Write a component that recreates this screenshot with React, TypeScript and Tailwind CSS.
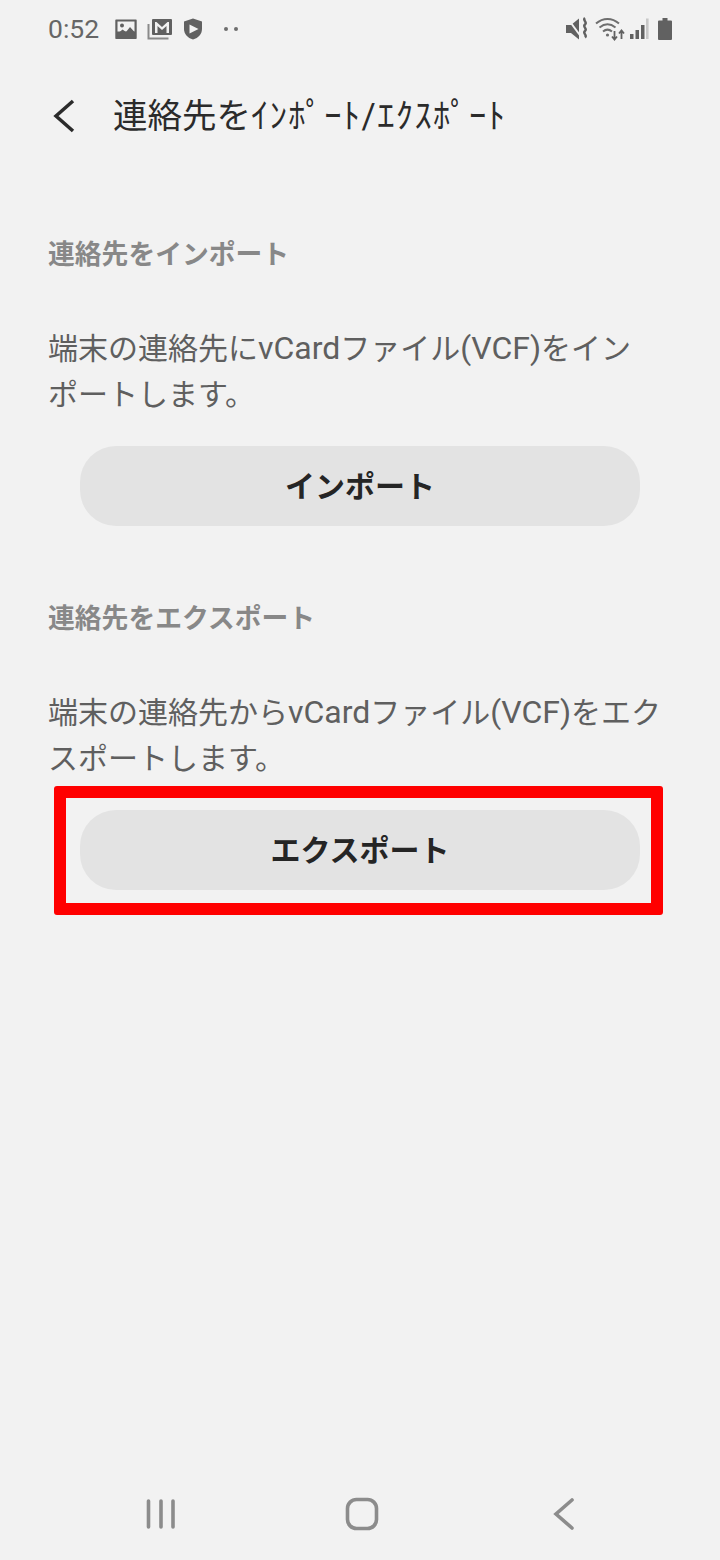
const font = "font-['Roboto','Noto_Sans_CJK_JP',sans-serif]";

const StatusLeft = () => (
  <div className="flex items-center">
    <span className="text-[26.500px] leading-none text-[#666666] w-[66px]">0:52</span>
    <svg width="24" height="24" viewBox="0 0 24 24" fill="#616161" className="mr-[9px]">
      <path d="M2 2.500h20a.7.7 0 0 1 .7.7v18a.7.7 0 0 1-.7.7H2a.7.7 0 0 1-.7-.7v-18a.7.7 0 0 1 .7-.7z" />
      <rect x="3.500" y="4.500" width="17" height="10" fill="#f2f2f2" />
      <path d="M3.500 17l5-4.500 3.500 2.500 4-5 4.500 5v5h-17z" />
      <circle cx="8" cy="8.500" r="2" />
    </svg>
    <svg width="26" height="24" viewBox="0 0 26 24" className="mr-[10px]">
      <path d="M1.500 7v14.500h20" fill="none" stroke="#8a8a8a" strokeWidth="2" />
      <rect x="5" y="2" width="20" height="16" rx="1" fill="#616161" />
      <path d="M8 16V5h1.500l5.500 5 5.500-5H22v11h-2.500V9l-4.500 4-4.500-4v7z" fill="#f2f2f2" />
    </svg>
    <svg width="20" height="24" viewBox="0 0 20 24" className="mr-[21px]">
      <path d="M10 1.500l9 3v7.500c0 5-3.500 9-9 10.500C4.500 21 1 17 1 12V4.500z" fill="#616161" />
      <path d="M6.500 7.500l9 4.500-9 4.500z" fill="#f2f2f2" />
    </svg>
    <span className="w-[4px] h-[4px] rounded-full bg-[#6e6e6e] mr-[6px]" />
    <span className="w-[4px] h-[4px] rounded-full bg-[#6e6e6e]" />
  </div>
);

const StatusRight = () => (
  <div className="flex items-center">
    <svg width="24" height="24" viewBox="0 0 24 24" className="mr-[6px]">
      <path d="M1 8h5l8-6.500v21L6 16H1z" fill="#616161" />
      <path d="M3 2l14 19" stroke="#f2f2f2" strokeWidth="2" />
      <path d="M20 1c-3 2.500 3 4 0 6.500s3 4 0 6.500 3 4 0 6.500" fill="none" stroke="#616161" strokeWidth="2.400" />
    </svg>
    <svg width="30" height="24" viewBox="0 0 30 24" fill="none" className="mr-[4px]">
      <path d="M1 6.500c7-6 16-6 23 0" stroke="#6e6e6e" strokeWidth="2" />
      <path d="M4.500 10.500c5-4 11-4 16 0" stroke="#6e6e6e" strokeWidth="2" />
      <path d="M8 14.500c3-2.500 6-2.500 9 0" stroke="#6e6e6e" strokeWidth="2" />
      <circle cx="12.500" cy="18" r="1.600" fill="#6e6e6e" />
      <path d="M19.500 14v8M17 19.500l2.500 3 2.500-3M26.500 22v-8M24 16.500l2.500-3 2.500 3" stroke="#616161" strokeWidth="1.800" />
    </svg>
    <svg width="20" height="24" viewBox="0 0 20 24" className="mr-[9px]">
      <rect x="1" y="17" width="3.500" height="5" fill="#616161" />
      <rect x="6.500" y="13" width="3.500" height="9" fill="#616161" />
      <rect x="12" y="8" width="3.500" height="14" fill="#616161" />
      <rect x="17" y="1.500" width="2.600" height="20.500" fill="#c8c8c8" />
    </svg>
    <svg width="14" height="22" viewBox="0 0 14 22">
      <path d="M4.500 0h5v2.500H13a1 1 0 0 1 1 1V21a1 1 0 0 1-1 1H1a1 1 0 0 1-1-1V3.500a1 1 0 0 1 1-1h3.500z" fill="#616161" />
    </svg>
  </div>
);

const Section = ({ heading, body, action, top }: { heading: string; body: React.ReactNode; action: React.ReactNode; top: string }) => (
  <section className={top}>
    <h2 className="text-[26.800px] leading-[36px] font-bold text-[#888888] px-[48px]">{heading}</h2>
    <p className="mt-[52px] text-[30px] leading-[46px] text-[#5f5f5f] pl-[48px] whitespace-nowrap">{body}</p>
    <div className="mt-[28px] px-[80px]">{action}</div>
  </section>
);

const PillButton = ({ label }: { label: string }) => (
  <button className="w-full h-[80px] rounded-[36px] bg-[#e3e3e3] text-[30px] font-bold text-[#252525]">{label}</button>
);

const Latin = ({ children }: { children: string }) => <span className="text-[32px]">{children}</span>;

export default function App() {
  return (
    <div className={`${font} relative w-[720px] h-[1560px] bg-[#f2f2f2] flex flex-col overflow-hidden`}>
      <div className="h-[58px] px-[48px] flex items-center justify-between">
        <StatusLeft />
        <StatusRight />
      </div>
      <div className="h-[116px] flex items-center pl-[53px]">
        <svg width="22" height="34" viewBox="0 0 22 34" fill="none" className="mr-[38px]">
          <path d="M20 2L3 17l17 15" stroke="#2b2b2b" strokeWidth="3.500" />
        </svg>
        <h1 className="text-[34.500px] leading-none text-[#2b2b2b] whitespace-nowrap">
          連絡先を<span className="tracking-[1.4px]">ｲﾝﾎﾟｰﾄ/ｴｸｽﾎﾟｰﾄ</span>
        </h1>
      </div>
      <Section
        top="mt-[63px]"
        heading="連絡先をインポート"
        body={
          <>
            端末の連絡先に<Latin>vCard</Latin>ファイル<Latin>(VCF)</Latin>をイン
            <br />
            ポートします。
          </>
        }
        action={<PillButton label="インポート" />}
      />
      <Section
        top="mt-[75px]"
        heading="連絡先をエクスポート"
        body={
          <>
            端末の連絡先から<Latin>vCard</Latin>ファイル<Latin>(VCF)</Latin>をエク
            <br />
            スポートします。
          </>
        }
        action={
          <div className="relative">
            <PillButton label="エクスポート" />
            <div className="absolute -left-[26px] -right-[23px] -top-[24px] -bottom-[25px] border-[12px] border-[#ff0000] rounded-[3px]" />
          </div>
        }
      />
      <div className="mt-auto h-[92px] flex items-center">
        <svg width="32" height="32" viewBox="0 0 32 32" className="ml-[145px]" fill="none" stroke="#8c8c8c" strokeWidth="3.600" strokeLinecap="round">
          <path d="M3.500 3v26M16 3v26M28 3v26" />
        </svg>
        <svg width="34" height="34" viewBox="0 0 34 34" className="ml-[168px]" fill="none" stroke="#8c8c8c" strokeWidth="3.600">
          <rect x="2.500" y="2.500" width="29" height="29" rx="9" />
        </svg>
        <svg width="22" height="34" viewBox="0 0 22 34" className="ml-[174px]" fill="none" stroke="#8c8c8c" strokeWidth="3.600" strokeLinecap="round">
          <path d="M19 3L3 17l16 14" />
        </svg>
      </div>
    </div>
  );
}
